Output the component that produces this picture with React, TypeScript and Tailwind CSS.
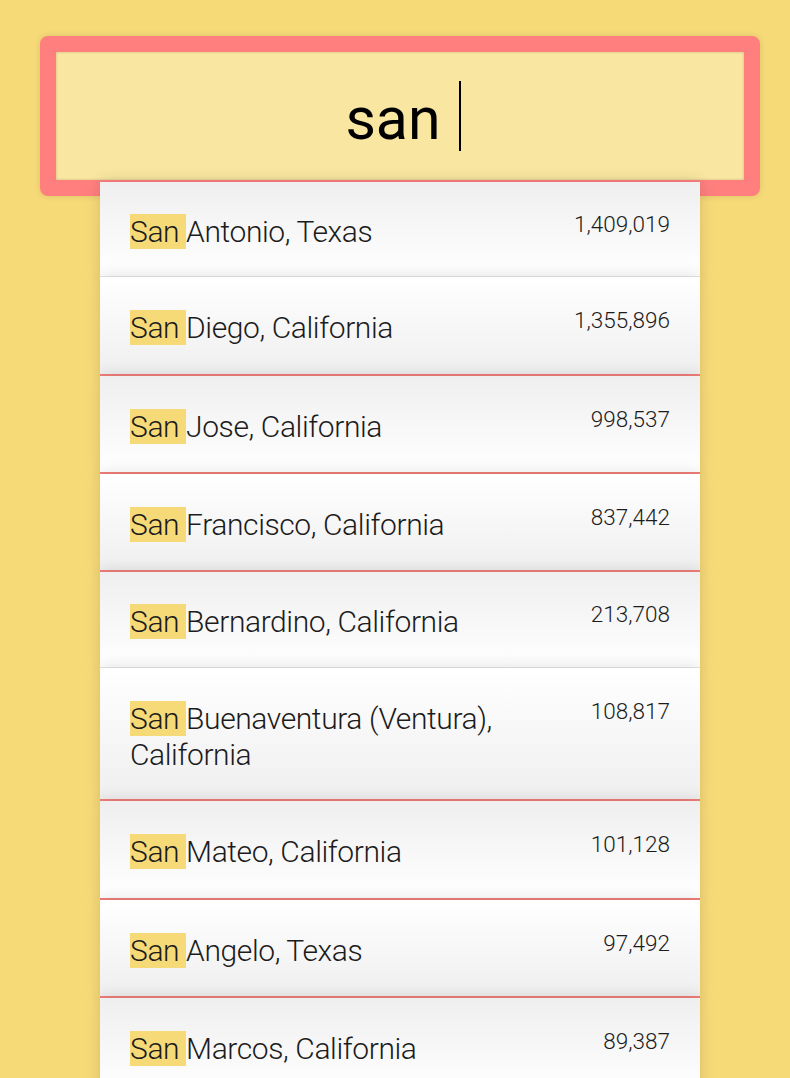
type City = {
  name: string
  population: string
  odd: boolean
  edge: 'pink' | 'soft'
  extra?: string
}

const cities: City[] = [
  { name: 'Antonio, Texas', population: '1,409,019', odd: true, edge: 'soft' },
  { name: 'Diego, California', population: '1,355,896', odd: false, edge: 'pink', extra: 'pb-[28px]' },
  { name: 'Jose, California', population: '998,537', odd: true, edge: 'pink' },
  { name: 'Francisco, California', population: '837,442', odd: false, edge: 'pink' },
  { name: 'Bernardino, California', population: '213,708', odd: true, edge: 'soft', extra: 'pb-[27px]' },
  { name: 'Buenaventura (Ventura), California', population: '108,817', odd: false, edge: 'pink', extra: 'pb-[26px]' },
  { name: 'Mateo, California', population: '101,128', odd: true, edge: 'pink', extra: 'pb-[28px]' },
  { name: 'Angelo, Texas', population: '97,492', odd: false, edge: 'pink' },
  { name: 'Marcos, California', population: '89,387', odd: true, edge: 'pink' },
]

const Suggestion = ({ city }: { city: City }) => (
  <li
    className={`flex items-start justify-between gap-4 px-[30px] shadow-[0_0_15px_rgba(0,0,0,0.14)] ${
      city.odd
        ? 'bg-gradient-to-t from-white to-[#efefef]'
        : 'bg-gradient-to-b from-white to-[#efefef]'
    } ${
      city.edge === 'pink'
        ? 'border-b-2 border-[#f17f7a] pt-[33px]'
        : 'border-b border-[#e6e6e6] pt-[32px]'
    } ${city.extra ?? (city.edge === 'pink' ? 'pb-[27px]' : 'pb-[26px]')}`}
  >
    <span className="max-w-[420px] text-[30px] leading-[36px] font-light tracking-[-0.4px] text-[#1c1c1c]">
      <span className="bg-[#f7da78]">San </span>
      {city.name}
    </span>
    <span className="-mt-[3px] shrink-0 text-[22.5px] leading-[27px] font-light text-[#1c1c1c]">
      {city.population}
    </span>
  </li>
)

const App = () => (
  <div
    className="h-[1078px] overflow-hidden bg-[#f7da78] pt-[36px]"
    style={{ fontFamily: 'Roboto, "Liberation Sans", sans-serif' }}
  >
    <div className="relative z-0 ml-[40px] flex h-[160px] w-[720px] items-center justify-center rounded-[8px] border-[16px] border-[#ff7f7f] bg-[#f8e6a1] shadow-[0_0_7px_rgba(0,0,0,0.12),inset_0_0_3px_rgba(0,0,0,0.19)]">
      <div className="flex items-center pl-[6px]">
        <span className="pt-[5px] text-[59px] leading-none text-black">san</span>
        <span className="ml-[18px] h-[70px] w-[2px] bg-black" />
      </div>
    </div>

    <ul className="relative z-10 -mt-[14px] ml-[100px] w-[600px]">
      {cities.map((city) => (
        <Suggestion city={city} key={city.name} />
      ))}
    </ul>
  </div>
)

export default App
